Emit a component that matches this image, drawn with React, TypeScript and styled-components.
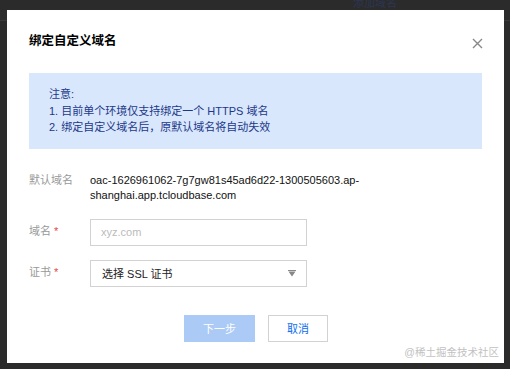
import React from "react";
import styled, { createGlobalStyle } from "styled-components";

const Global = createGlobalStyle`
  html, body { margin: 0; padding: 0; }
  body {
    width: 510px;
    height: 369px;
    overflow: hidden;
    background:
      linear-gradient(to bottom, transparent 20px, #3a3a3a 20px, #3a3a3a 21px, transparent 21px),
      #2b2b2b;
    font-family: "Liberation Sans", Arial, "Noto Sans CJK SC", sans-serif;
  }
`;

const Page = styled.div`
  position: relative;
  width: 510px;
  height: 369px;
  padding: 10px 6px 0 7px;
  box-sizing: border-box;
`;

const BehindText = styled.div`
  position: absolute;
  top: -4px;
  left: 353px;
  font-size: 11px;
  line-height: 14px;
  color: #2d3652;
`;

const Modal = styled.div`
  position: relative;
  z-index: 1;
  width: 497px;
  height: 353px;
  background: #fff;
  box-sizing: border-box;
  padding: 22px 22px 21px 22px;
  display: flex;
  flex-direction: column;
`;

const Header = styled.div`
  display: flex;
  align-items: center;
  justify-content: space-between;
  height: 18px;
`;

const Title = styled.h3`
  margin: 0;
  font-size: 12.5px;
  line-height: 18px;
  font-weight: bold;
  color: #000;
`;

const Close = styled.button`
  border: 0;
  background: none;
  padding: 0;
  margin-right: -1px;
  margin-top: 5px;
  width: 12px;
  height: 12px;
  display: flex;
  align-items: center;
  justify-content: center;
`;

const Notice = styled.div`
  margin-top: 22.5px;
  background: #d9e7fc;
  padding: 13.5px 20px 13px;
  font-size: 11px;
  line-height: 16.5px;
  color: #1c3888;
`;

const Form = styled.div`
  margin-top: 24px;
  display: flex;
  flex-direction: column;
`;

const Row = styled.div<{ $gap?: number }>`
  display: flex;
  align-items: ${(p) => (p.$gap === 0 ? "flex-start" : "center")};
  margin-top: ${(p) => p.$gap ?? 0}px;
`;

const Label = styled.div`
  width: 61px;
  flex: none;
  font-size: 11px;
  line-height: 15.5px;
  color: #999;
`;

const Star = styled.span`
  color: #e54545;
  margin-left: 3px;
`;

const Value = styled.div`
  font-size: 11px;
  line-height: 15.5px;
  color: #111;
  width: 285px;
`;

const Input = styled.input`
  width: 217px;
  height: 27px;
  box-sizing: border-box;
  border: 1px solid #d2d2d2;
  padding: 0 10px;
  font-family: inherit;
  font-size: 11px;
  color: #333;
  outline: none;
  &::placeholder { color: #bbb; }
`;

const Select = styled.div`
  width: 217px;
  height: 27px;
  box-sizing: border-box;
  border: 1px solid #d2d2d2;
  padding: 0 10px 0 11px;
  display: flex;
  align-items: center;
  justify-content: space-between;
  font-size: 11px;
  color: #222;
`;

const Footer = styled.div`
  margin-top: 28px;
  display: flex;
  justify-content: center;
  gap: 13px;
  padding-left: 1px;
`;

const Button = styled.button<{ $primary?: boolean }>`
  height: 27px;
  width: ${(p) => (p.$primary ? 71 : 60)}px;
  box-sizing: border-box;
  font-family: inherit;
  font-size: 11px;
  padding: 0;
  border: 1px solid ${(p) => (p.$primary ? "#abcbf6" : "#d2d2d2")};
  background: ${(p) => (p.$primary ? "#abcbf6" : "#fff")};
  color: ${(p) => (p.$primary ? "#fff" : "#0a6ef0")};
`;

const Watermark = styled.div`
  position: absolute;
  z-index: 2;
  right: 11px;
  bottom: 10px;
  font-size: 10.5px;
  line-height: 14px;
  color: #c2c2c2;
`;

export default function App() {
  return (
    <>
      <Global />
      <Page>
        <BehindText>添加域名</BehindText>
        <Modal>
          <Header>
            <Title>绑定自定义域名</Title>
            <Close aria-label="关闭">
              <svg width="11" height="11" viewBox="0 0 11 11">
                <path d="M1 1L10 10M10 1L1 10" stroke="#888" strokeWidth="1.4" />
              </svg>
            </Close>
          </Header>
          <Notice>
            <div>注意:</div>
            <div>1. 目前单个环境仅支持绑定一个 HTTPS 域名</div>
            <div>2. 绑定自定义域名后，原默认域名将自动失效</div>
          </Notice>
          <Form>
            <Row $gap={0}>
              <Label>默认域名</Label>
              <Value>oac-1626961062-7g7gw81s45ad6d22-1300505603.ap-shanghai.app.tcloudbase.com</Value>
            </Row>
            <Row $gap={15}>
              <Label>
                域名<Star>*</Star>
              </Label>
              <Input placeholder="xyz.com" />
            </Row>
            <Row $gap={14}>
              <Label>
                证书<Star>*</Star>
              </Label>
              <Select>
                <span>选择 SSL 证书</span>
                <svg width="8" height="7" viewBox="0 0 8 7">
                  <path d="M0 0H8V1H0Z M0.5 1.5H7.5L4 6.5Z" fill="#888" />
                </svg>
              </Select>
            </Row>
          </Form>
          <Footer>
            <Button $primary>下一步</Button>
            <Button>取消</Button>
          </Footer>
        </Modal>
        <Watermark>@稀土掘金技术社区</Watermark>
      </Page>
    </>
  );
}
